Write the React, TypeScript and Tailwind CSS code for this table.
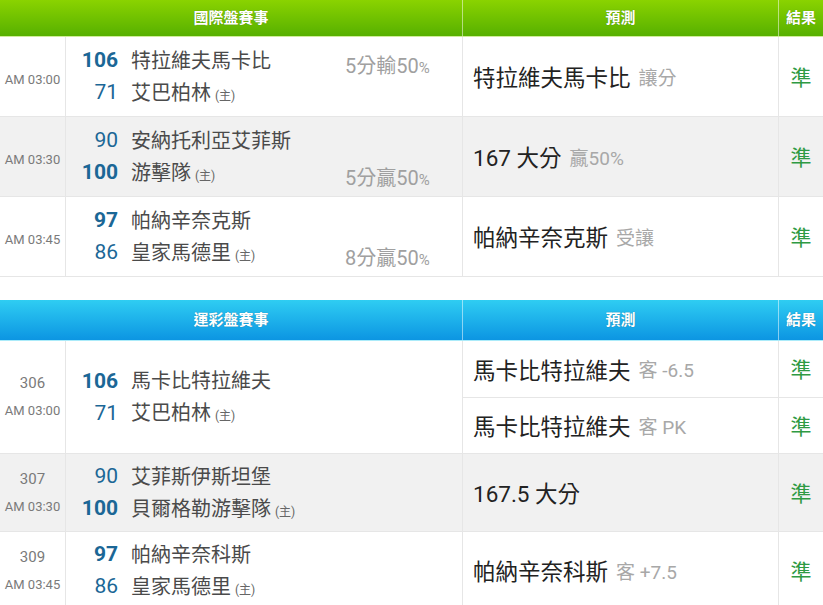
type Team = { num: string; name: string; bold?: boolean; home?: boolean };
type Pred = { main: string; sub?: string };
type Row = {
  code?: string;
  time: string;
  teams: [Team, Team];
  hc?: { text: string; line: 0 | 1 };
  preds: Pred[];
};

const intl: Row[] = [
  {
    time: "AM 03:00",
    teams: [
      { num: "106", name: "特拉維夫馬卡比", bold: true },
      { num: "71", name: "艾巴柏林", home: true },
    ],
    hc: { text: "5分輸50", line: 0 },
    preds: [{ main: "特拉維夫馬卡比", sub: "讓分" }],
  },
  {
    time: "AM 03:30",
    teams: [
      { num: "90", name: "安納托利亞艾菲斯" },
      { num: "100", name: "游擊隊", bold: true, home: true },
    ],
    hc: { text: "5分贏50", line: 1 },
    preds: [{ main: "167 大分", sub: "贏50%" }],
  },
  {
    time: "AM 03:45",
    teams: [
      { num: "97", name: "帕納辛奈克斯", bold: true },
      { num: "86", name: "皇家馬德里", home: true },
    ],
    hc: { text: "8分贏50", line: 1 },
    preds: [{ main: "帕納辛奈克斯", sub: "受讓" }],
  },
];

const lottery: Row[] = [
  {
    code: "306",
    time: "AM 03:00",
    teams: [
      { num: "106", name: "馬卡比特拉維夫", bold: true },
      { num: "71", name: "艾巴柏林", home: true },
    ],
    preds: [
      { main: "馬卡比特拉維夫", sub: "客 -6.5" },
      { main: "馬卡比特拉維夫", sub: "客 PK" },
    ],
  },
  {
    code: "307",
    time: "AM 03:30",
    teams: [
      { num: "90", name: "艾菲斯伊斯坦堡" },
      { num: "100", name: "貝爾格勒游擊隊", bold: true, home: true },
    ],
    preds: [{ main: "167.5 大分" }],
  },
  {
    code: "309",
    time: "AM 03:45",
    teams: [
      { num: "97", name: "帕納辛奈科斯", bold: true },
      { num: "86", name: "皇家馬德里", home: true },
    ],
    preds: [{ main: "帕納辛奈科斯", sub: "客 +7.5" }],
  },
];

const Header = ({ title, blue }: { title: string; blue?: boolean }) => (
  <div
    className={`grid grid-cols-[463px_316px_44px] border-b border-white/60 text-[15px] font-bold text-white [text-shadow:0_0_1px_rgba(0,0,0,0.35)] ${
      blue
        ? "h-[41px] bg-linear-to-b from-[#2fcdf2] to-[#0c95e2]"
        : "h-[37px] bg-linear-to-b from-[#8ad300] to-[#56b000]"
    }`}
  >
    <div className="flex items-center justify-center border-r border-white/50">{title}</div>
    <div className="flex items-center justify-center border-r border-white/50">預測</div>
    <div className="flex items-center justify-center">結果</div>
  </div>
);

const TeamLine = ({ t, hc }: { t: Team; hc?: string }) => (
  <div className="flex h-8 items-center">
    <span
      className={`w-[52px] text-right text-[21px] text-[#1b6796] ${t.bold ? "font-bold" : ""}`}
    >
      {t.num}
    </span>
    <span className="ml-[13px] w-[214px] text-[20px] text-[#4a4a4a]">
      {t.name}
      {t.home && <span className="ml-1 text-[12px] text-[#666]">(主)</span>}
    </span>
    {hc && (
      <span className="mt-[10px] text-[20px] text-[#a0a0a0]">
        {hc}
        <span className="text-[15px]">%</span>
      </span>
    )}
  </div>
);

const PredCell = ({ p }: { p: Pred }) => (
  <div className="grid flex-1 grid-cols-[316px_44px] border-b border-[#e6e6e6] last:border-b-0">
    <div className="flex items-center border-r border-[#e6e6e6] pl-[10px] pt-1">
      <span className="text-[22.5px] text-[#222]">{p.main}</span>
      {p.sub && <span className="ml-[8px] text-[19px] text-[#a8a8a8]">{p.sub}</span>}
    </div>
    <div className="flex items-center justify-center pt-1 text-[21px] text-[#2f9a43]">準</div>
  </div>
);

const MatchRow = ({ r, i }: { r: Row; i: number }) => {
  const tall = r.preds.length > 1;
  return (
    <div
      className={`grid grid-cols-[66px_397px_360px] border-b border-[#e6e6e6] ${
        i % 2 === 1 ? "bg-[#f1f1f1]" : "bg-white"
      } ${tall ? "h-[113px]" : r.code ? "h-[78px]" : "h-[80px]"}`}
    >
      <div className="flex flex-col items-center justify-center border-r border-[#e6e6e6] text-[#7a7a7a]">
        {r.code ? (
          <>
            <div className="flex h-[27px] items-center text-[15px]">{r.code}</div>
            <div className="flex h-[27px] items-center text-[13px]">{r.time}</div>
          </>
        ) : (
          <div className="pt-[6px] text-[13px]">{r.time}</div>
        )}
      </div>
      <div className="flex flex-col justify-center border-r border-[#e6e6e6]">
        <TeamLine t={r.teams[0]} hc={r.hc?.line === 0 ? r.hc.text : undefined} />
        <TeamLine t={r.teams[1]} hc={r.hc?.line === 1 ? r.hc.text : undefined} />
      </div>
      <div className="flex flex-col">
        {r.preds.map((p, k) => (
          <PredCell key={k} p={p} />
        ))}
      </div>
    </div>
  );
};

export default function App() {
  return (
    <div className="h-[605px] w-[823px] overflow-hidden bg-white font-[Roboto,'Noto_Sans_CJK_TC',sans-serif] leading-none">
      <Header title="國際盤賽事" />
      {intl.map((r, i) => (
        <MatchRow key={i} r={r} i={i} />
      ))}
      <div className="h-[23px]" />
      <Header title="運彩盤賽事" blue />
      {lottery.map((r, i) => (
        <MatchRow key={i} r={r} i={i} />
      ))}
    </div>
  );
}
